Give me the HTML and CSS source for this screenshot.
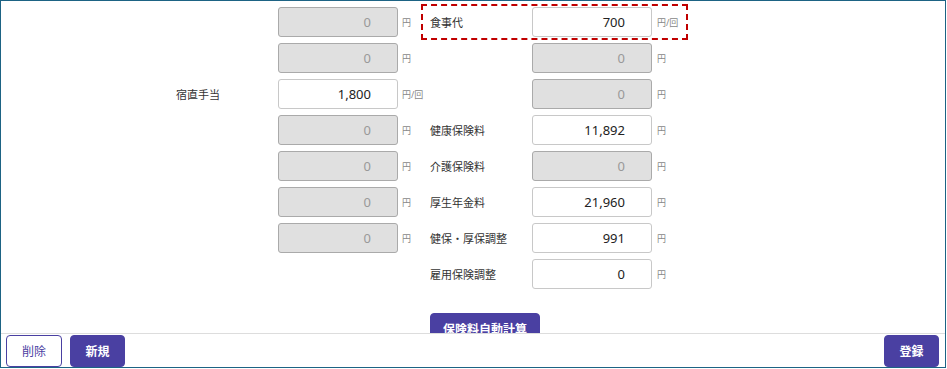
FILE: index.html
```html
<!DOCTYPE html>
<html lang="ja">
<head>
  <meta charset="UTF-8">
  <title>給与入力</title>
  <link rel="stylesheet" href="styles.css">
</head>
<body>
  <div class="frame">
    <div class="content">
      <div class="rows">

        <div class="row">
          <div class="half left">
            <span class="label"></span>
            <input class="field" type="text" value="0" disabled>
            <span class="unit">円</span>
          </div>
          <div class="half right highlight">
            <span class="label">食事代</span>
            <input class="field" type="text" value="700">
            <span class="unit">円/回</span>
          </div>
        </div>

        <div class="row">
          <div class="half left">
            <span class="label"></span>
            <input class="field" type="text" value="0" disabled>
            <span class="unit">円</span>
          </div>
          <div class="half right">
            <span class="label"></span>
            <input class="field" type="text" value="0" disabled>
            <span class="unit">円</span>
          </div>
        </div>

        <div class="row">
          <div class="half left">
            <span class="label">宿直手当</span>
            <input class="field" type="text" value="1,800">
            <span class="unit">円/回</span>
          </div>
          <div class="half right">
            <span class="label"></span>
            <input class="field" type="text" value="0" disabled>
            <span class="unit">円</span>
          </div>
        </div>

        <div class="row">
          <div class="half left">
            <span class="label"></span>
            <input class="field" type="text" value="0" disabled>
            <span class="unit">円</span>
          </div>
          <div class="half right">
            <span class="label">健康保険料</span>
            <input class="field" type="text" value="11,892">
            <span class="unit">円</span>
          </div>
        </div>

        <div class="row">
          <div class="half left">
            <span class="label"></span>
            <input class="field" type="text" value="0" disabled>
            <span class="unit">円</span>
          </div>
          <div class="half right">
            <span class="label">介護保険料</span>
            <input class="field" type="text" value="0" disabled>
            <span class="unit">円</span>
          </div>
        </div>

        <div class="row">
          <div class="half left">
            <span class="label"></span>
            <input class="field" type="text" value="0" disabled>
            <span class="unit">円</span>
          </div>
          <div class="half right">
            <span class="label">厚生年金料</span>
            <input class="field" type="text" value="21,960">
            <span class="unit">円</span>
          </div>
        </div>

        <div class="row">
          <div class="half left">
            <span class="label"></span>
            <input class="field" type="text" value="0" disabled>
            <span class="unit">円</span>
          </div>
          <div class="half right">
            <span class="label">健保・厚保調整</span>
            <input class="field" type="text" value="991">
            <span class="unit">円</span>
          </div>
        </div>

        <div class="row">
          <div class="half left"></div>
          <div class="half right">
            <span class="label">雇用保険調整</span>
            <input class="field" type="text" value="0">
            <span class="unit">円</span>
          </div>
        </div>

      </div>

      <div class="calc-row">
        <button class="button primary calc">保険料自動計算</button>
      </div>
    </div>

    <div class="footer">
      <button class="button outline">削除</button>
      <button class="button primary">新規</button>
      <span class="spacer"></span>
      <button class="button primary">登録</button>
    </div>
  </div>
</body>
</html>
```

FILE: styles.css
```css
body {
  margin: 0;
  background: #fff;
  color: #333;
  font-family: "Noto Sans", "Noto Sans CJK JP", sans-serif;
}

.frame {
  width: 946px;
  height: 368px;
  box-sizing: border-box;
  border: 1px solid #1d6384;
  display: flex;
  flex-direction: column;
}

.content {
  height: 332px;
  overflow: hidden;
}

.rows {
  display: flex;
  flex-direction: column;
  gap: 6px;
  padding-top: 6px;
}

.row {
  display: flex;
  height: 30px;
}

.half {
  display: flex;
  align-items: center;
}

.left {
  flex: none;
  width: 420px;
  padding-left: 175px;
  box-sizing: border-box;
}

.right {
  border: 2px dashed transparent;
  padding: 1px 2px 1px 7px;
  margin: -3px 0;
}

.right.highlight {
  border-color: #c00000;
}

.label {
  flex: none;
  width: 102px;
  font-size: 11px;
  color: #333;
}

.field {
  flex: none;
  width: 120px;
  height: 30px;
  box-sizing: border-box;
  border: 1px solid #c8c8c8;
  border-radius: 3px;
  background: #fff;
  padding: 0 26px 0 6px;
  text-align: right;
  font-family: "Noto Sans", sans-serif;
  font-size: 13px;
  color: #222;
}

.field:disabled {
  background: #e0e0e0;
  border-color: #aaa;
  color: #999;
}

.unit {
  flex: none;
  margin-left: 4px;
  font-size: 9px;
  color: #888;
  white-space: nowrap;
}

.right .unit {
  margin-left: 5px;
  width: 27px;
}

.calc-row {
  padding: 24px 0 0 429px;
}

.button {
  height: 32px;
  border-radius: 4px;
  font-family: "Noto Sans", "Noto Sans CJK JP", sans-serif;
  font-size: 12px;
  font-weight: bold;
  padding: 0;
  cursor: pointer;
}

.primary {
  background: #4a40a2;
  border: 1px solid #4a40a2;
  color: #fff;
}

.outline {
  background: #fff;
  border: 1px solid #4a40a2;
  color: #4a40a2;
  font-weight: normal;
}

.calc {
  width: 110px;
}

.footer {
  flex: 1;
  display: flex;
  gap: 8px;
  align-items: flex-end;
  border-top: 1px solid #ddd;
  padding: 0 6px 0 5px;
}

.footer .button {
  width: 55px;
}

.footer .outline {
  width: 56px;
}

.spacer {
  flex: 1;
}
```
